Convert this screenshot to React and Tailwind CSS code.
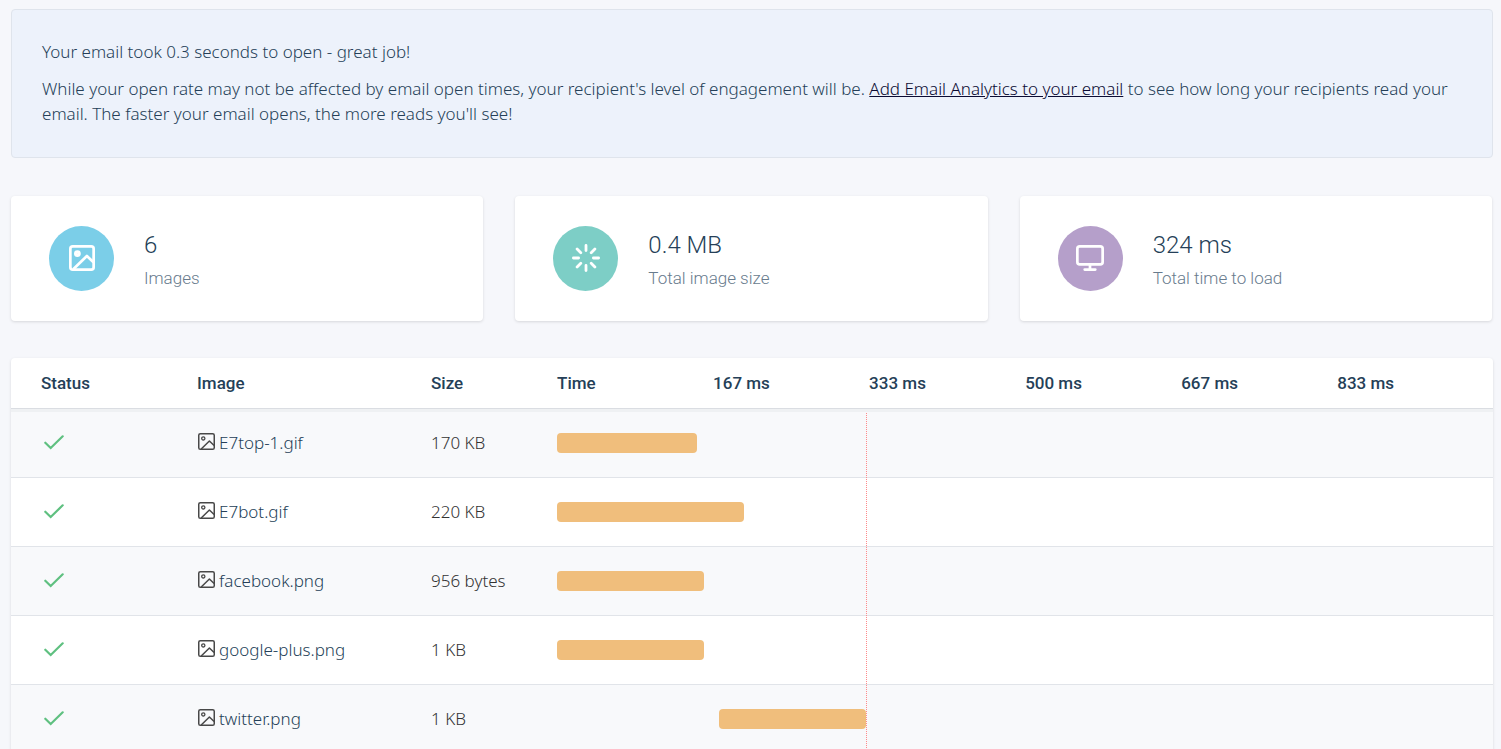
const rows = [
  { name: "E7top-1.gif", size: "170 KB", start: 0, length: 15 },
  { name: "E7bot.gif", size: "220 KB", start: 0, length: 20 },
  { name: "facebook.png", size: "956 bytes", start: 0, length: 15.7 },
  { name: "google-plus.png", size: "1 KB", start: 0, length: 15.7 },
  { name: "twitter.png", size: "1 KB", start: 17.3, length: 15.7 },
];

const ticks = ["167 ms", "333 ms", "500 ms", "667 ms", "833 ms"];

function PictureIcon() {
  return (
    <svg width="26" height="26" viewBox="0 0 26 26" fill="none" stroke="currentColor" strokeWidth="2.7" strokeLinejoin="round">
      <rect x="1.35" y="1.35" width="23.3" height="23.3" rx="2.4" />
      <circle cx="8.4" cy="8.6" r="1.8" strokeWidth="3.2" />
      <path d="M4.5 24 17.9 11l6.6 6.2" />
    </svg>
  );
}

function LoadingIcon() {
  return (
    <svg width="28" height="28" viewBox="0 0 28 28" fill="none" stroke="currentColor" strokeWidth="2.8" strokeLinecap="round">
      <path d="M14 1.4v5.2M14 21.4v5.2M1.4 14h5.2M21.4 14h5.2M5.1 5.1l3.7 3.7M19.2 19.2l3.7 3.7M22.9 5.1l-3.7 3.7M8.8 19.2l-3.7 3.7" />
    </svg>
  );
}

function MonitorIcon() {
  return (
    <svg width="28" height="26" viewBox="0 0 28 26" fill="none" stroke="currentColor" strokeWidth="2.7" strokeLinecap="round">
      <rect x="1.35" y="1.35" width="25.3" height="18" rx="2.4" />
      <path d="M14 19.5v5M8.7 24.6h10.6" />
    </svg>
  );
}

function FileIcon() {
  return (
    <svg className="mb-[3px] shrink-0 text-[#484848]" width="17" height="17" viewBox="0 0 17 17" fill="none" stroke="currentColor" strokeWidth="1.5" strokeLinejoin="round">
      <rect x="0.75" y="0.75" width="15.5" height="15.5" rx="1.6" />
      <circle cx="5.3" cy="5.4" r="1.6" strokeWidth="1.3" />
      <path d="M3.2 16 11.4 8l4.7 4.5" />
    </svg>
  );
}

function CheckIcon() {
  return (
    <svg className="mb-0.5 text-[#5fc080]" width="20" height="15" viewBox="0 0 20 15" fill="none" stroke="currentColor" strokeWidth="2.2" strokeLinecap="round" role="img" aria-label="Loaded">
      <path d="M1.3 7.7 6.7 13 18.7 1.3" />
    </svg>
  );
}

function StatCard({ icon, color, value, label }) {
  return (
    <div className="flex flex-1 items-center gap-[30px] rounded bg-white py-[30px] pl-[38px] shadow-[0_1px_3px_rgba(0,0,0,0.13)]">
      <div className={`flex h-[65px] w-[65px] items-center justify-center rounded-full pb-px text-white ${color}`}>
        {icon}
      </div>
      <div>
        <div className="text-2xl leading-[38px]">{value}</div>
        <div className="pt-px leading-[26px] text-[#687b8d]">{label}</div>
      </div>
    </div>
  );
}

export default function App() {
  return (
    <main className="h-screen overflow-hidden bg-[#f6f7fb] pt-[9px] pr-2 pl-[11px] font-['Roboto',sans-serif] text-[17px] font-light text-[#253f58]">
      <section className="rounded border border-[#dfe4ec] bg-[#edf2fb] px-[30px] pt-[29px] pb-[31px] font-['Noto_Sans',sans-serif] leading-[25px]">
        <p className="mb-3">Your email took 0.3 seconds to open - great job!</p>
        <p>
          While your open rate may not be affected by email open times, your recipient's level of engagement will be.{" "}
          <a href="#analytics" className="text-[#0b0b33] underline">
            Add Email Analytics to your email
          </a>{" "}
          to see how long your recipients read your email. The faster your email opens, the more reads you'll see!
        </p>
      </section>

      <section className="mt-[38px] mr-px flex gap-8">
        <StatCard icon={<PictureIcon />} color="bg-[#7bcee8]" value="6" label="Images" />
        <StatCard icon={<LoadingIcon />} color="bg-[#7dcec6]" value="0.4 MB" label="Total image size" />
        <StatCard icon={<MonitorIcon />} color="bg-[#b59fca]" value="324 ms" label="Total time to load" />
      </section>

      <section className="relative mt-[37px] rounded bg-white shadow-[0_1px_3px_rgba(0,0,0,0.13)]">
        <table className="w-full table-fixed border-separate border-spacing-0 text-left">
          <colgroup>
            <col className="w-[10.53%]" />
            <col className="w-[15.79%]" />
            <col className="w-[8.5%]" />
            <col className="w-[10.53%]" />
            <col className="w-[10.53%]" />
            <col className="w-[10.53%]" />
            <col className="w-[10.53%]" />
            <col className="w-[10.53%]" />
            <col />
          </colgroup>
          <thead>
            <tr className="h-[51px]">
              {["Status", "Image", "Size", "Time", ...ticks].map((title) => (
                <th key={title} className="border-b border-[#dadde2] pt-0.5 pl-[30px] font-medium whitespace-nowrap">
                  {title}
                </th>
              ))}
            </tr>
          </thead>
          <tbody className="font-['Noto_Sans',sans-serif] [&>tr:first-child>td]:shadow-[inset_0_3px_0_#eff1f3]">
            {rows.map((row) => (
              <tr key={row.name} className="h-[69px] odd:bg-[#f8f9fb] even:bg-white">
                <td className="border-b border-[#e1e4e9] pl-[33px]">
                  <CheckIcon />
                </td>
                <td className="border-b border-[#e1e4e9] pl-[31px]">
                  <div className="flex items-center gap-1">
                    <FileIcon />
                    {row.name}
                  </div>
                </td>
                <td className="border-b border-[#e1e4e9] pl-[30px] whitespace-nowrap text-[#333]">{row.size}</td>
                <td colSpan={6} className="border-b border-[#e1e4e9] pl-[30px]">
                  <div
                    className="h-5 rounded bg-[#f0be7c]"
                    style={{ marginLeft: `${row.start}%`, width: `${row.length}%` }}
                  />
                </td>
              </tr>
            ))}
          </tbody>
        </table>
        <div className="absolute top-[55px] bottom-0 left-[57.7%] w-px bg-[repeating-linear-gradient(to_bottom,#ff8a8a_0_1px,transparent_1px_2px)]" />
      </section>
    </main>
  );
}
